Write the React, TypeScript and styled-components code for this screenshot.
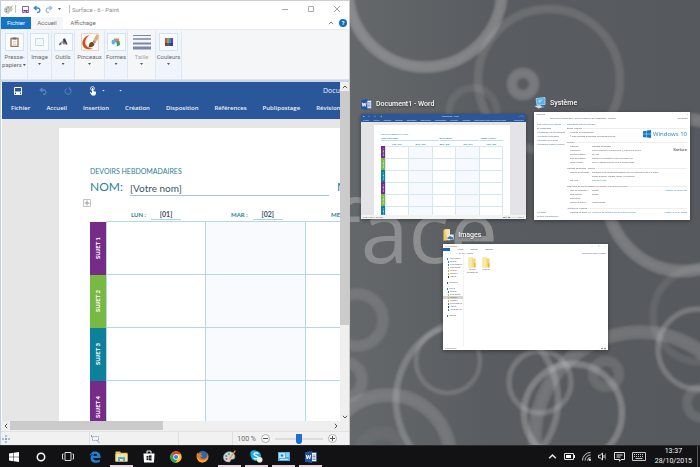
import React from "react";
import styled, { createGlobalStyle, css } from "styled-components";

const GlobalStyle = createGlobalStyle`
  *, *::before, *::after { box-sizing: border-box; }
  body { margin: 0; font-family: Roboto, "Open Sans", sans-serif; font-size: 7px; }
  button { font: inherit; color: inherit; background: none; border: 0; padding: 0; margin: 0; }
  svg { display: block; flex: none; }
  ul, figure, h1, h2, h3, p, dl, dd { margin: 0; padding: 0; font: inherit; list-style: none; }
`;

const Desktop = styled.div`
  display: flex;
  flex-direction: column;
  height: 100vh;
  overflow: hidden;
  background: #595c60;
`;

const Workspace = styled.main`
  flex: 1;
  min-height: 0;
  display: grid;
  grid-template-columns: 1fr 1fr;
`;

/* ---------- Paint window ---------- */

const PaintWindow = styled.section`
  display: flex;
  flex-direction: column;
  min-width: 0;
  min-height: 0;
  background: #fff;
  border-top: 1px solid #cfcfcf;
  border-left: 1px solid #bcd0ea;
  border-right: 1px solid #c8c8c8;
  color: #6d6d6d;
`;

const TitleBar = styled.header`
  display: flex;
  align-items: center;
  height: 16px;
  padding: 0 9px 0 3px;
`;

const Divider = styled.span`
  width: 1px;
  height: 8px;
  margin-left: 2px;
  background: #c4c4c4;
`;

const QuickAccess = styled.div`
  display: flex;
  align-items: center;
  gap: 4px;
  padding: 0 5px 0 6px;
`;

const WindowTitle = styled.h1`
  flex: 1;
  padding-left: 2px;
  color: #8f8f8f;
  font-size: 6px;
`;

const WindowButtons = styled.div`
  display: flex;
  align-items: center;
  gap: 20px;
`;

const IconButton = styled.button`
  display: flex;
  align-items: center;
  justify-content: center;
`;

const TabBar = styled.nav`
  display: flex;
  align-items: stretch;
  height: 12px;
  padding-right: 2px;
  font-size: 6px;
`;

const PaintTab = styled.button<{ $kind?: "file" | "active" }>`
  width: 32px;
  line-height: 12px;
  ${(p) =>
    p.$kind === "file" &&
    css`
      width: 30px;
      background: #1473c6;
      color: #fff;
    `}
  ${(p) => p.$kind === "active" && css`background: #f5f6f7;`}
  ${(p) => !p.$kind && css`width: 40px;`}
`;

const TabTools = styled.div`
  display: flex;
  align-items: center;
  gap: 5px;
  margin-left: auto;
`;

const HelpButton = styled.button`
  width: 8px;
  height: 8px;
  border-radius: 50%;
  background: #0f6fc5;
  color: #fff;
  line-height: 8px;
  font-weight: 700;
`;

const Ribbon = styled.div`
  display: flex;
  height: 51px;
  padding: 1px 1px 0;
  background: #f5f6f8;
  border-top: 1px solid #e6e9ee;
  border-bottom: 1px solid #dce3ee;
  font-size: 6px;
`;

const RibbonButton = styled.button<{ $width: number; $plain?: boolean; $muted?: boolean }>`
  display: flex;
  flex-direction: column;
  align-items: center;
  width: ${(p) => p.$width}px;
  padding-top: 2px;
  line-height: 8px;
  white-space: nowrap;
  border-right: 1px solid #dde8f4;
  background: ${(p) => (p.$plain ? "transparent" : "#f0f5fb")};
  color: ${(p) => (p.$muted ? "#ababab" : "#6b6b6b")};
`;

const RibbonIcon = styled.span<{ $framed?: boolean }>`
  display: flex;
  align-items: center;
  justify-content: center;
  width: 19px;
  height: 18px;
  margin-bottom: 2px;
  border: 1px solid ${(p) => (p.$framed ? "#d3e3f4" : "transparent")};
  background: ${(p) => (p.$framed ? "#f9fcff" : "transparent")};
`;

const RibbonLabel = styled.span`
  display: flex;
  align-items: center;
`;

const Caret = styled.span<{ $light?: boolean }>`
  flex: none;
  width: 3px;
  height: 2px;
  margin: 2px 1px;
  background: ${(p) => (p.$light ? "#e6eefa" : "#555")};
  clip-path: polygon(0 0, 100% 0, 50% 100%);
`;

const CanvasArea = styled.div`
  flex: 1;
  min-height: 0;
  display: grid;
  grid-template-columns: minmax(0, 1fr) 9px;
  grid-template-rows: minmax(0, 1fr) 10px;
  border-top: 2px solid #c9d6ea;
`;

const Canvas = styled.div`
  display: flex;
  flex-direction: column;
  overflow: hidden;
  margin-left: 1px;
  background: #e6e6e6;
`;

const ScrollBar = styled.div<{ $horizontal?: boolean }>`
  display: flex;
  flex-direction: ${(p) => (p.$horizontal ? "row" : "column")};
  align-items: stretch;
  background: #efefef;
  grid-column: ${(p) => (p.$horizontal ? "1 / -1" : "auto")};
  button { flex: 0 0 9px; }
`;

const ScrollThumb = styled.div<{ $share: number }>`
  flex: 0 0 ${(p) => p.$share}%;
  margin-bottom: 1px;
  background: #cbcbcb;
`;

const Spacer = styled.div`
  flex: 1;
`;

/* Word document shown on the canvas */

const WordHeader = styled.div`
  flex: none;
  height: 37px;
  background: #2a579a;
  color: #eef3fa;
  font-family: "Open Sans", "Noto Sans", sans-serif;
`;

const WordQuickBar = styled.div`
  display: flex;
  align-items: center;
  height: 17px;
  padding-left: 12px;
`;

const WordQuickTools = styled.div`
  display: flex;
  align-items: center;
  gap: 17px;
`;

const TouchTools = styled.div`
  display: flex;
  align-items: center;
  gap: 4px;
  margin-right: -5px;
`;

const DocTitle = styled.span`
  margin-left: auto;
  width: 17px;
  overflow: hidden;
  white-space: nowrap;
`;

const WordTabs = styled.nav`
  display: flex;
  align-items: center;
  gap: 16px;
  height: 18px;
  padding-left: 9px;
  font-size: 6px;
  white-space: nowrap;
  font-weight: 600;
`;

const Sheet = styled.article`
  flex: 1;
  min-height: 0;
  overflow: hidden;
  margin: 9px 0 0 57px;
  padding: 38px 0 0 31px;
  background: #fff;
  color: #2c7f97;
  font-family: Lato, "Liberation Sans", sans-serif;
  white-space: nowrap;
`;

const SheetTitle = styled.h2`
  font-size: 7px;
  line-height: 10px;
`;

const NameLine = styled.div`
  display: flex;
  align-items: flex-end;
  height: 20px;
  font-size: 12px;
  line-height: 18px;
`;

const NameField = styled.span`
  flex: 0 0 199px;
  margin: 0 8px 0 7px;
  border-bottom: 1px solid #a9c4cc;
  color: #3c5566;
  font-size: 10px;
  line-height: 14px;
`;

const HandleRow = styled.div`
  height: 12px;
  padding-top: 3px;
  margin-left: -7px;
`;

const DayRow = styled.div`
  display: flex;
  height: 13px;
  padding-left: 15px;
  font-size: 6px;
  font-weight: 700;
  line-height: 13px;
`;

const Day = styled.div`
  flex: 0 0 100px;
  display: flex;
  align-items: center;
  gap: 5px;
  padding-left: 26px;
`;

const DayValue = styled.span`
  width: 30px;
  border-bottom: 1px solid #b2d2dc;
  text-align: center;
  color: #35505f;
  font-size: 7px;
  line-height: 9px;
`;

const WeekTable = styled.table`
  border-collapse: collapse;
  table-layout: fixed;
  width: 416px;
`;

const SubjectCell = styled.th<{ $color: string; $width: number }>`
  width: ${(p) => p.$width}px;
  padding: 0;
  background: ${(p) => p.$color};
  color: #fff;
  span {
    display: block;
    margin: 0 auto;
    writing-mode: vertical-rl;
    transform: rotate(180deg);
  }
`;

const WeekSubject = styled(SubjectCell)`
  height: 53px;
  font-size: 6px;
  font-weight: 900;
  line-height: 16px;
`;

const WeekCell = styled.td<{ $tinted?: boolean }>`
  border: 1px solid #b3d8e6;
  background: ${(p) => (p.$tinted ? "#f9fafd" : "#fff")};
`;

const StatusBar = styled.footer`
  display: flex;
  align-items: center;
  height: 14px;
  background: #f1f1f1;
  border-top: 1px solid #e2e2e2;
`;

const StatusCell = styled.div<{ $width: number }>`
  display: flex;
  align-items: center;
  width: ${(p) => p.$width}px;
  height: 100%;
  padding-left: 1px;
  border-right: 1px solid #dfdfdf;
`;

const ZoomControl = styled.label`
  display: flex;
  align-items: center;
  gap: 5px;
  margin-left: auto;
  padding-right: 12px;
`;

const RoundButton = styled.button`
  width: 9px;
  height: 9px;
  border: 1px solid #b4b4b4;
  border-radius: 50%;
  background: #fafafa;
  display: flex;
  align-items: center;
  justify-content: center;
`;

const ZoomRange = styled.input`
  appearance: none;
  width: 48px;
  height: 10px;
  margin: 0;
  background: linear-gradient(#dcdcdc, #dcdcdc) center / 100% 2px no-repeat;
  &::-webkit-slider-thumb {
    appearance: none;
    width: 6px;
    height: 10px;
    background: #1a6fd0;
    border-radius: 0 0 3px 3px;
  }
`;

/* ---------- Task switcher ---------- */

const Switcher = styled.section`
  position: relative;
  display: flex;
  flex-direction: column;
  justify-content: center;
  gap: 7px;
  min-width: 0;
  padding: 0 10px 0 11px;
  background: linear-gradient(90deg, #65686b, #595c60 40%, #56595d);
  overflow: hidden;
`;

const Wallpaper = styled.svg`
  position: absolute;
  inset: 0;
  width: 100%;
  height: 100%;
`;

const PreviewRow = styled.div<{ $columns: string }>`
  position: relative;
  display: grid;
  grid-template-columns: ${(p) => p.$columns};
  justify-content: center;
  align-items: center;
  gap: 8px;
`;

const Preview = styled.figure`
  min-width: 0;
`;

const PreviewCaption = styled.figcaption`
  display: flex;
  align-items: center;
  gap: 4px;
  height: 17px;
  padding-bottom: 2px;
  color: #f8f8f8;
  font-size: 7px;
  font-weight: 500;
  text-shadow: 0 1px 2px rgba(0, 0, 0, 0.5);
`;

const Thumb = styled.div<{ $ratio: string }>`
  display: flex;
  flex-direction: column;
  aspect-ratio: ${(p) => p.$ratio};
  overflow: hidden;
  background: #fff;
  color: #555;
  font-family: "Liberation Sans", sans-serif;
  font-size: 2px;
  line-height: 4px;
  white-space: nowrap;
  box-shadow: 0 1px 4px rgba(0, 0, 0, 0.4);
`;

const MiniWordHeader = styled.div`
  height: 8px;
  background: #2a579a;
  color: #e4ecf7;
`;

const MiniLine = styled.div<{ $gap?: number }>`
  display: flex;
  gap: ${(p) => p.$gap ?? 5}px;
  height: 4px;
  padding: 0 2px;
`;

const MiniDesk = styled.div`
  flex: 1;
  min-height: 0;
  display: flex;
  justify-content: center;
  padding: 3px 16px 0 13px;
  background: #e4e4e6;
  overflow: hidden;
`;

const MiniSheet = styled.div`
  flex: 1;
  padding: 7px 7px 0;
  background: #fff;
  color: #2c7f97;
  overflow: hidden;
`;

const MiniFields = styled.div`
  display: grid;
  grid-template-columns: 58fr 40fr 23fr;
  gap: 1px;
  font-weight: 700;
  span { border-bottom: 1px solid #c6dde4; height: 5px; }
`;

const MiniDays = styled.div`
  display: flex;
  justify-content: space-around;
  padding-left: 4px;
  margin-top: 1px;
  height: 4px;
  font-weight: 700;
`;

const MiniTable = styled(WeekTable)`
  width: 100%;
`;

const MiniSubject = styled(SubjectCell)`
  height: 12px;
  font-size: 2px;
  line-height: 4px;
`;

const MiniCell = styled.td<{ $tinted?: boolean }>`
  padding: 0;
  border: 1px solid #d6e7f0;
  background: ${(p) => (p.$tinted ? "#f6f9fd" : "#fff")};
`;

const MiniStatus = styled.div`
  display: flex;
  justify-content: space-between;
  height: 4px;
  padding: 0 2px;
  background: #f3f3f3;
`;

const MiniBody = styled.div<{ $side: number }>`
  flex: 1;
  min-height: 0;
  display: grid;
  grid-template-columns: ${(p) => p.$side}px minmax(0, 1fr);
`;

const SideList = styled.div`
  display: flex;
  flex-direction: column;
  padding: 2px 0 2px 3px;
  color: #44688f;
`;

const SystemContent = styled.div`
  padding: 2px 3px 0 1px;
`;

const SystemHeading = styled.h2`
  color: #2e6aa5;
`;

const SystemSection = styled.h3`
  display: flex;
  align-items: center;
  gap: 1px;
  &::after { content: ""; flex: 1; height: 1px; background: #ededed; }
`;

const SystemBlock = styled.div`
  display: flex;
  justify-content: space-between;
  align-items: flex-start;
  margin-bottom: 2px;
  padding-left: 3px;
`;

const SystemRows = styled.dl`
  display: grid;
  grid-template-columns: 22px auto;
`;

const WindowsMark = styled.span`
  display: flex;
  align-items: center;
  gap: 2px;
  color: #1a7fd1;
  font-family: "Open Sans", sans-serif;
  font-size: 6px;
  line-height: 8px;
`;

const SurfaceMark = styled.span`
  color: #333;
  font-size: 4px;
  line-height: 12px;
`;

const Link = styled.a`
  color: #2f7fc9;
  text-decoration: none;
`;

const ExplorerTabs = styled.div`
  display: flex;
  gap: 7px;
  height: 3px;
  line-height: 3px;
  span:first-child { width: 7px; background: #1668b5; }
`;

const TreeItem = styled.div<{ $level?: number; $selected?: boolean; $tone: string }>`
  display: flex;
  align-items: center;
  gap: 1px;
  height: 3px;
  line-height: 3px;
  padding-left: ${(p) => (p.$level ? 5 : 4)}px;
  background: ${(p) => (p.$selected ? "#d4d4d4" : "transparent")};
  &::before { content: ""; width: 1px; height: 2px; background: ${(p) => p.$tone}; }
`;

const Tree = styled.div`
  padding-top: 2px;
  border-right: 1px solid #f2f2f2;
`;

const FolderGrid = styled.div`
  display: flex;
  gap: 6px;
  padding: 2px 4px;
`;

const FolderItem = styled.div`
  display: flex;
  flex-direction: column;
  align-items: center;
  width: 8px;
  line-height: 3px;
`;

/* ---------- Taskbar ---------- */

const Taskbar = styled.footer`
  display: flex;
  flex: none;
  height: 22px;
  background: #121214;
  border-top: 1px solid #2b2c2e;
  color: #f2f2f2;
`;

const TaskButton = styled.button<{ $open?: boolean }>`
  width: 27px;
  display: flex;
  align-items: center;
  justify-content: center;
  background: ${(p) =>
    p.$open ? "linear-gradient(#ded6dc, #ded6dc) center bottom / 23px 2px no-repeat" : "none"};
`;

const Tray = styled.div`
  display: flex;
  align-items: center;
  gap: 7px;
  margin-left: auto;
`;

const Clock = styled.time`
  padding: 0 5px 0 2px;
  margin-right: 2px;
  border-right: 1px solid #55575a;
  text-align: center;
  line-height: 10px;
  height: 21px;
`;

/* ---------- Icons ---------- */

const SaveIcon = ({ color = "#7a3f98", size = 7 }: { color?: string; size?: number }) => (
  <svg width={size} height={size} viewBox="0 0 8 8">
    <path d="M.5.5h7v7h-7z" fill="none" stroke={color} />
    <path d="M1 4.500h6v1H1zM2 5h4v3H2z" fill={color} />
    <path d="M3 6h1v2H3z" fill="#fff" />
  </svg>
);

const UndoIcon = ({ color, flip }: { color: string; flip?: boolean }) => (
  <svg width="8" height="8" viewBox="0 0 8 8">
    <g transform={flip ? "translate(8 0) scale(-1 1)" : undefined} fill="none" stroke={color} strokeWidth="1.3">
      <path d="M3.500 1 1.200 3l2.300 2M1.500 3h3.200a2.200 2.200 0 0 1 0 4.400H4" />
    </g>
  </svg>
);

const RedoCircleIcon = () => (
  <svg width="8" height="8" viewBox="0 0 8 8" fill="none" stroke="#5d83bb">
    <path d="M2.600 1.600a3 3 0 1 0 3 .1M5.400.3v2h2" />
  </svg>
);

const TouchIcon = () => (
  <svg width="8" height="10" viewBox="0 0 8 10">
    <circle cx="3.500" cy="2.500" r="1.900" fill="none" stroke="#fff" strokeWidth=".8" />
    <path d="M3 2h1.200v3l2.800.8v1.800L6 9.500H3L.8 6.600l.8-.6L3 7z" fill="#fff" />
  </svg>
);

const Chevron = ({ d, color = "#555", size = 6 }: { d: string; color?: string; size?: number }) => (
  <svg width={size} height={size} viewBox="0 0 6 6" fill="none" stroke={color}>
    <path d={d} />
  </svg>
);
const UP = "M.8 4.200 3 2l2.200 2.200";
const DOWN = "M.8 1.800 3 4l2.200-2.200";
const LEFT = "M4.200.8 2 3l2.200 2.200";
const RIGHT = "M1.800.8 4 3 1.800 5.200";

const PaletteIcon = ({ size = 9 }: { size?: number }) => (
  <svg width={size} height={size} viewBox="0 0 14 14">
    <path d="M8 2C3.500 1.500.5 4.500.5 8s3 5 6 5c1.600 0 1.200-1.600 2-2.500 1.200-1.200 4 .2 4.300-3C13 4.800 11 2.400 8 2z" fill="#cfd6d8" stroke="#8e989c" strokeWidth=".6" />
    <circle cx="3.600" cy="6.500" r="1.200" fill="#3b8fd0" />
    <circle cx="6.500" cy="4.300" r="1.200" fill="#59ab4e" />
    <circle cx="3.800" cy="9.700" r="1.200" fill="#d9534a" />
    <path d="M12.800.4 7.200 8.200l-1 2.300 2-1.400L13.800 1z" fill="#d9a03f" />
  </svg>
);

const ClipboardIcon = () => (
  <svg width="9" height="10" viewBox="0 0 9 10">
    <path d="M1 1.500h7v8H1z" fill="#fff" stroke="#a3734c" strokeWidth="1.300" />
    <path d="M2.700.5h3.600v2H2.700z" fill="#6b6b6b" />
    <path d="M3 4.500h3M3 6h3M3 7.500h3" stroke="#b9b9b9" strokeWidth=".6" />
  </svg>
);

const SelectIcon = () => (
  <svg width="9" height="8" viewBox="0 0 9 8">
    <path d="M.5.5h8v7h-8z" fill="#f3f9fd" stroke="#8fb6cf" strokeDasharray="1 .6" strokeWidth=".7" />
  </svg>
);

const ToolsIcon = () => (
  <svg width="10" height="8" viewBox="0 0 10 8">
    <path d="M.8 7.500 2 4.600l1.800 1.500z" fill="#384b63" />
    <path d="m2.400 4.400 2-1.900L6 4 3.900 6z" fill="#8aa7c4" />
    <path d="m5 1 2-.8 2.500 6-1.700.5L7 4.500 5.500 5z" fill="#34435a" />
    <circle cx="6" cy="5.500" r="1" fill="#d5563b" />
  </svg>
);

const BrushIcon = () => (
  <svg width="18" height="18" viewBox="0 0 18 18">
    <path d="M.5.5h17v17H.5z" fill="#fbf8f5" stroke="#e0d6ce" />
    <path d="M8.500 2C4 3 .8 7 1.500 11.500 2.500 16 8 17.500 12 15.500 7.500 15.500 4 13 4.200 9c.2-3 2.300-5.500 4.300-7z" fill="#cf4f20" />
    <path d="M8 12.500c.2-2.500 2-4.100 4-3.100l1.400 1.500c-.3 2.700-3.400 3.600-6.400 3.300.8-.6 1-.8 1-1.700z" fill="#754522" />
    <path d="m12 8.500 3.300-7L17.500 2 17 6l-3.300 4.300z" fill="#e6aa72" />
    <path d="m11.500 9 1.200-1.800 2 1.700-1 1.900z" fill="#8b9399" />
  </svg>
);

const ShapesIcon = () => (
  <svg width="10" height="9" viewBox="0 0 10 9">
    <path d="M3 .5h5v4H3z" fill="#ea7b66" />
    <circle cx="3" cy="4" r="2.500" fill="#60aee0" />
    <path d="M5 3.500 8.500 3 9 7 6 8.500z" fill="#3e9a65" />
    <path d="M3.600 4.500h2v4h-2z" fill="#e7f3f9" />
  </svg>
);

const SizeIcon = () => (
  <svg width="18" height="16" viewBox="0 0 18 16" stroke="#7d87a8">
    <path d="M0 1.500h18" strokeWidth="1" />
    <path d="M0 5h18" strokeWidth="1.500" />
    <path d="M0 9.500h18" strokeWidth="2" />
    <path d="M0 14h18" strokeWidth="3" />
  </svg>
);

const ColorsIcon = () => (
  <svg width="8" height="8" viewBox="0 0 8 8">
    <path d="M0 0h2v8H0z" fill="#e8463c" />
    <path d="M2 0h2v8H2z" fill="#64c441" />
    <path d="M4 0h2v8H4z" fill="#3292d8" />
    <path d="M6 0h2v8H6z" fill="#7a35c4" />
    <path d="M0 5h8v3H0z" fill="#3b1f59" opacity=".55" />
  </svg>
);

const MoveHandle = () => (
  <svg width="8" height="8" viewBox="0 0 8 8" fill="none" stroke="#c4c4c4">
    <path d="M.5.5h7v7h-7z" />
    <path d="M4 1.500v5M1.500 4h5" stroke="#9c9c9c" />
  </svg>
);

const CrossIcon = () => (
  <svg width="8" height="8" viewBox="0 0 8 8" fill="none" stroke="#6f86ad">
    <path d="M4 0v8M0 4h8" strokeDasharray="2 1" />
  </svg>
);

const CropIcon = () => (
  <svg width="9" height="8" viewBox="0 0 9 8" fill="none" stroke="#8c9fc2">
    <path d="M1.500 1.500h6v4h-6z" strokeDasharray="2 .6" strokeWidth=".8" />
    <path d="M6 5.500 8.500 8M.5 0v2" />
  </svg>
);

const WindowsIcon = ({ size = 10, color = "#fff" }: { size?: number; color?: string }) => (
  <svg width={size} height={size} viewBox="0 0 10 10" fill={color}>
    <path d="M0 1.500 4.500.8v4H0zM5 .7 10 0v4.800H5zM0 5.300h4.500v4L0 8.600zM5 5.300h5V10l-5-.7z" />
  </svg>
);

const WordIcon = ({ size = 11 }: { size?: number }) => (
  <svg width={size} height={size} viewBox="0 0 12 12">
    <path d="M6 1.500h5.500v9H6z" fill="#f5f8fd" stroke="#2a579a" strokeWidth=".7" />
    <path d="M7.500 4h3M7.500 5.500h3M7.500 7h3M7.500 8.500h3" stroke="#2a579a" strokeWidth=".6" />
    <path d="M0 1.300 7 0v12L0 10.700z" fill="#2453a0" />
    <path d="m1.300 4 .9 4 1.200-3.600L4.600 8l1-4" fill="none" stroke="#fff" />
  </svg>
);

const SystemIcon = () => (
  <svg width="12" height="12" viewBox="0 0 12 12">
    <path d="M2 1.500 11 .5v7L3 8z" fill="#4eb2ec" stroke="#bfe4fa" strokeWidth=".7" />
    <path d="m4 3 5-.6L5 6.500z" fill="#9bd8fa" />
    <path d="m.5 9 5-1 3.500 2-4.500 1.500z" fill="#d5dde3" />
    <circle cx="9" cy="10" r="1.300" fill="#3a8bcb" />
  </svg>
);

const PicturesIcon = () => (
  <svg width="11" height="12" viewBox="0 0 11 12">
    <path d="M.5 1 2 .3h4.500V11L.5 11.700z" fill="#f1cc63" />
    <path d="M2 .3h5v11H5z" fill="#f9e3a0" />
    <path d="M4 5.500h6.700v5H4z" fill="#dceffa" />
    <path d="M4.500 8.500 7 7l3.200 1.500V10H4.500z" fill="#3d7fae" />
  </svg>
);

const EdgeIcon = () => (
  <svg width="12" height="12" viewBox="0 0 12 12" fill="#2180d4">
    <path d="M.6 5.600C.9 2.400 3.200.4 6.200.4c3.300 0 5.300 2.300 5.300 5.200v1.500H4.200c.1 1.700 1.500 2.400 3.200 2.400 1.300 0 2.400-.3 3.400-.9v2.400c-1 .5-2.300.8-3.900.8-3.200 0-5.300-1.800-5.300-4.600 0-1.800.9-3.200 2.500-4.100C2.700 3.400 1.500 4 .6 5.600zm3.700-.8h3.900c0-1.200-.7-2-1.900-2S4.500 3.600 4.300 4.800z" />
  </svg>
);

const FolderIcon = () => (
  <svg width="13" height="11" viewBox="0 0 13 11">
    <path d="M.5.5H5l1 1.200h6.500v8.800H.5z" fill="#e9c457" />
    <path d="M.5 3h12v7.500H.5z" fill="#f8e39b" />
    <path d="M3 10.500V6h7v4.500H8V8H5v2.500z" fill="#4cb1dc" />
  </svg>
);

const StoreIcon = () => (
  <svg width="12" height="13" viewBox="0 0 12 13">
    <path d="M4 3.500V1h4v2.500" fill="none" stroke="#fff" />
    <path d="M.5 3.500h11l-.5 9H1z" fill="#fff" />
    <path d="m3.500 6 2-.3v2h-2zM6 5.600l2.500-.4v2.500H6zM3.500 8.200h2v2l-2-.3zM6 8.200h2.500v2.500L6 10.300z" fill="#161616" />
  </svg>
);

const ChromeIcon = () => (
  <svg width="12" height="12" viewBox="0 0 12 12">
    <circle cx="6" cy="6" r="5.700" fill="#f4c932" />
    <path d="M6 6 1.100 3.100A5.700 5.700 0 0 1 11 3.300H6z" fill="#dc4437" />
    <path d="M1.100 3.100a5.700 5.700 0 0 0 4.200 8.600L8 7.500 6 6z" fill="#2fa05a" />
    <circle cx="6" cy="6" r="2.700" fill="#fff" />
    <circle cx="6" cy="6" r="2.100" fill="#3d7ee0" />
  </svg>
);

const FirefoxIcon = () => (
  <svg width="13" height="13" viewBox="0 0 13 13">
    <circle cx="6.700" cy="6" r="5.300" fill="#2768b4" />
    <path d="M1.300 2.500C-.4 6 .6 10.500 4.300 12c4 1.500 8.200-1.200 8.200-5.500 0-1.500-.4-2.800-1.200-3.800.4 3-.6 5.500-3.300 6.100-2 .4-3.500-.8-3.700-2.300 1 .4 2 .2 2.600-.6L5 5.100c-.4-.8.200-1.500.9-1.900C4.400 2.700 3 3 2.400 3.900z" fill="#ea7a20" />
    <path d="M4 12c4 1.500 8-1.500 8-5.500-.8 3-3.500 4.500-6.500 4C3.500 10 2 9 1.300 7 1.300 9.500 2 11 4 12z" fill="#f3ae35" />
  </svg>
);

const SkypeIcon = () => (
  <svg width="13" height="13" viewBox="0 0 13 13">
    <circle cx="4" cy="4" r="3.700" fill="#1aaee8" />
    <circle cx="6" cy="6" r="5" fill="#1aaee8" />
    <path d="M8.300 4C7.700 2.600 4 2.500 4 4.300c0 2 4.300 1.100 4.300 3.200 0 1.900-4 1.900-4.700.3" fill="none" stroke="#fff" strokeWidth="1.300" />
    <circle cx="9.700" cy="9.700" r="2.800" fill="#eef3d8" />
  </svg>
);

const PanelIcon = () => (
  <svg width="12" height="9" viewBox="0 0 12 9">
    <path d="M0 0h12v9H0z" fill="#52b1e6" />
    <path d="M1 1h6v5H1z" fill="#c3e6f8" />
    <path d="M8 2h3M8 4h3M2 7.500h8" stroke="#e9f7ff" strokeWidth=".8" />
    <circle cx="4" cy="3.500" r="1.300" fill="#2b83be" />
  </svg>
);

const taskItems: { name: string; open?: boolean; icon: React.ReactNode }[] = [
  { name: "Démarrer", icon: <WindowsIcon /> },
  {
    name: "Cortana",
    icon: (
      <svg width="10" height="10" viewBox="0 0 10 10">
        <circle cx="5" cy="5" r="3.700" fill="none" stroke="#fff" strokeWidth="1.500" />
      </svg>
    ),
  },
  {
    name: "Affichage des tâches",
    icon: (
      <svg width="12" height="9" viewBox="0 0 12 9" fill="none" stroke="#d9d9d9">
        <path d="M3 .5h6v8H3zM1.500 2h-1v5h1M10.500 2h1v5h-1" />
      </svg>
    ),
  },
  { name: "Edge", icon: <EdgeIcon /> },
  { name: "Explorateur", open: true, icon: <FolderIcon /> },
  { name: "Store", icon: <StoreIcon /> },
  { name: "Chrome", icon: <ChromeIcon /> },
  { name: "Firefox", icon: <FirefoxIcon /> },
  { name: "Paint", open: true, icon: <PaletteIcon size={13} /> },
  { name: "Skype", open: true, icon: <SkypeIcon /> },
  { name: "Système", open: true, icon: <PanelIcon /> },
  { name: "Word", open: true, icon: <WordIcon size={12} /> },
];

const PURPLE = "#772b88";
const GREEN = "#78b944";
const TEAL = "#0d819b";

const subjects = [PURPLE, GREEN, TEAL, PURPLE];

/* x, y, radius, stroke width, opacity */
const rings: [number, number, number, number, number][] = [
  [75, -10, 77, 12, 0.42],
  [199, 80, 71, 9, 0.2],
  [173, 84, 11, 11, 0.32],
  [123, 112, 24, 8, 0.14],
  [333, 195, 76, 13, 0.36],
  [7, 320, 26, 12, 0.2],
  [-6, 380, 18, 12, 0.2],
  [38, 457, 62, 14, 0.26],
  [32, 455, 22, 14, 0.08],
  [127, 400, 81, 7, 0.34],
  [98, 361, 32, 5, 0.25],
  [190, 382, 31, 6, 0.3],
  [223, 413, 49, 7, 0.4],
  [290, 437, 105, 14, 0.28],
  [256, 374, 13, 11, 0.2],
  [350, 315, 47, 8, 0.14],
  [348, 349, 40, 6, 0.34],
  [352, 403, 15, 10, 0.2],
];

function PaintApp() {
  return (
    <PaintWindow>
      <TitleBar>
        <PaletteIcon />
        <Divider />
        <QuickAccess>
          <IconButton aria-label="Enregistrer"><SaveIcon /></IconButton>
          <IconButton aria-label="Annuler"><UndoIcon color="#2b8bcb" /></IconButton>
          <IconButton aria-label="Rétablir"><UndoIcon color="#a9bdd0" flip /></IconButton>
          <IconButton aria-label="Personnaliser"><Caret /></IconButton>
        </QuickAccess>
        <Divider />
        <WindowTitle>Surface - 6 - Paint</WindowTitle>
        <WindowButtons>
          <IconButton aria-label="Réduire">
            <svg width="6" height="6" stroke="#aaa"><path d="M0 3.500h6" /></svg>
          </IconButton>
          <IconButton aria-label="Agrandir">
            <svg width="6" height="6" stroke="#aaa" fill="none"><path d="M.5.5h5v5h-5z" /></svg>
          </IconButton>
          <IconButton aria-label="Fermer">
            <svg width="6" height="6" stroke="#aaa"><path d="m0 0 6 6M6 0 0 6" /></svg>
          </IconButton>
        </WindowButtons>
      </TitleBar>
      <TabBar>
        <PaintTab $kind="file">Fichier</PaintTab>
        <PaintTab $kind="active">Accueil</PaintTab>
        <PaintTab>Affichage</PaintTab>
        <TabTools>
          <IconButton aria-label="Réduire le ruban"><Chevron d={UP} color="#888" /></IconButton>
          <HelpButton>?</HelpButton>
        </TabTools>
      </TabBar>
      <Ribbon>
        <RibbonButton $width={26}>
          <RibbonIcon $framed><ClipboardIcon /></RibbonIcon>
          Presse-
          <RibbonLabel>papiers<Caret /></RibbonLabel>
        </RibbonButton>
        <RibbonButton $width={24}>
          <RibbonIcon $framed><SelectIcon /></RibbonIcon>
          Image<Caret />
        </RibbonButton>
        <RibbonButton $width={23}>
          <RibbonIcon $framed><ToolsIcon /></RibbonIcon>
          Outils<Caret />
        </RibbonButton>
        <RibbonButton $width={30} $plain>
          <RibbonIcon><BrushIcon /></RibbonIcon>
          Pinceaux<Caret />
        </RibbonButton>
        <RibbonButton $width={23}>
          <RibbonIcon $framed><ShapesIcon /></RibbonIcon>
          Formes<Caret />
        </RibbonButton>
        <RibbonButton $width={28} $plain $muted>
          <RibbonIcon><SizeIcon /></RibbonIcon>
          Taille<Caret />
        </RibbonButton>
        <RibbonButton $width={26}>
          <RibbonIcon $framed><ColorsIcon /></RibbonIcon>
          Couleurs<Caret />
        </RibbonButton>
      </Ribbon>
      <CanvasArea>
        <Canvas>
          <WordHeader>
            <WordQuickBar>
              <WordQuickTools>
                <SaveIcon color="#fff" size={8} />
                <UndoIcon color="#5d83bb" />
                <RedoCircleIcon />
                <TouchTools><TouchIcon /><Caret $light /></TouchTools>
                <Caret $light />
              </WordQuickTools>
              <DocTitle>Document1</DocTitle>
            </WordQuickBar>
            <WordTabs>
              {["Fichier", "Accueil", "Insertion", "Création", "Disposition", "Références", "Publipostage", "Révision"].map((t) => (
                <button key={t}>{t}</button>
              ))}
            </WordTabs>
          </WordHeader>
          <Sheet>
            <SheetTitle>DEVOIRS HEBDOMADAIRES</SheetTitle>
            <NameLine>
              NOM: <NameField>[Votre nom]</NameField> MOIS
            </NameLine>
            <HandleRow><MoveHandle /></HandleRow>
            <DayRow>
              {[["LUN :", "[01]"], ["MAR :", "[02]"], ["MER :", "[03]"]].map(([d, n]) => (
                <Day key={d}>{d}<DayValue>{n}</DayValue></Day>
              ))}
            </DayRow>
            <WeekTable>
              <tbody>
                {subjects.map((c, i) => (
                  <tr key={i}>
                    <WeekSubject $color={c} $width={16}><span>SUJET {i + 1}</span></WeekSubject>
                    <WeekCell />
                    <WeekCell $tinted />
                    <WeekCell />
                    <WeekCell $tinted />
                  </tr>
                ))}
              </tbody>
            </WeekTable>
          </Sheet>
        </Canvas>
        <ScrollBar>
          <IconButton aria-label="Haut"><Chevron d={UP} /></IconButton>
          <ScrollThumb $share={69} />
          <Spacer />
          <IconButton aria-label="Bas"><Chevron d={DOWN} /></IconButton>
        </ScrollBar>
        <ScrollBar $horizontal>
          <IconButton aria-label="Gauche"><Chevron d={LEFT} /></IconButton>
          <ScrollThumb $share={44} />
          <Spacer />
          <IconButton aria-label="Droite"><Chevron d={RIGHT} /></IconButton>
          <IconButton aria-label="Redimensionner" />
        </ScrollBar>
      </CanvasArea>
      <StatusBar>
        <StatusCell $width={89}><CrossIcon /></StatusCell>
        <StatusCell $width={89}><CropIcon /></StatusCell>
        <StatusCell $width={54} />
        <ZoomControl>
          100 %
          <RoundButton aria-label="Zoom arrière">
            <svg width="5" height="5" stroke="#555"><path d="M0 2.500h5" /></svg>
          </RoundButton>
          <ZoomRange type="range" min="0" max="100" defaultValue="50" aria-label="Zoom" />
          <RoundButton aria-label="Zoom avant">
            <svg width="5" height="5" stroke="#555"><path d="M0 2.500h5M2.500 0v5" /></svg>
          </RoundButton>
        </ZoomControl>
      </StatusBar>
    </PaintWindow>
  );
}

function WordPreview() {
  return (
    <Preview>
      <PreviewCaption><WordIcon />Document1 - Word</PreviewCaption>
      <Thumb $ratio="165 / 105">
        <MiniWordHeader>
          <MiniLine $gap={4}><span>■</span><span>↶</span><span>↻</span><span>☝</span><Spacer /><span>Document1 - Word</span><Spacer /><span>— □ ×</span></MiniLine>
          <MiniLine $gap={4}>
            <span>Fichier</span><span>Accueil</span><span>Insertion</span><span>Création</span><span>Disposition</span><span>Références</span><span>Publipostage</span><span>Révision</span><span>Affichage</span><span>Dites-nous ce que vous voulez faire</span><Spacer /><span>Connexion</span><span>Partager</span>
          </MiniLine>
        </MiniWordHeader>
        <MiniDesk>
          <MiniSheet>
            DEVOIRS HEBDOMADAIRES
            <MiniFields><span>NOM: [Votre nom]</span><span>MOIS: [Mois]</span><span>ANNÉE: [Année]</span></MiniFields>
            <MiniDays>
              {["LUN : [01]", "MAR : [02]", "MER : [03]", "JEU : [04]", "VEN : [05]"].map((d) => <span key={d}>{d}</span>)}
            </MiniDays>
            <MiniTable>
              <tbody>
                {[PURPLE, GREEN, TEAL, PURPLE, GREEN, TEAL].map((c, i) => (
                  <tr key={i}>
                    <MiniSubject $color={c} $width={4}><span>SUJET {i + 1}</span></MiniSubject>
                    <MiniCell /><MiniCell $tinted /><MiniCell /><MiniCell $tinted /><MiniCell />
                  </tr>
                ))}
              </tbody>
            </MiniTable>
          </MiniSheet>
        </MiniDesk>
        <MiniStatus><span>Page 1 sur 1 &nbsp; 51 mots</span><span>▤ ▥ ▦ — ▪ — + 100 %</span></MiniStatus>
      </Thumb>
    </Preview>
  );
}

function SystemPreview() {
  return (
    <Preview>
      <PreviewCaption><SystemIcon />Système</PreviewCaption>
      <Thumb $ratio="156 / 108">
        <MiniLine><span>▪ Système</span><Spacer /><span>×</span></MiniLine>
        <MiniLine $gap={3}><span>←</span><span>→</span><span>↑</span><span>Panneau de configuration › Tous les Panneaux de configuration › Système</span><Spacer /><span>Rechercher</span></MiniLine>
        <MiniBody $side={32}>
          <SideList>
            <span>Page d'accueil du panneau</span>
            <span>de configuration</span>
            <span>▪ Gestionnaire de périphériques</span>
            <span>▪ Paramètres d'utilisation</span>
            <span>▪ Protection du système</span>
            <span>▪ Paramètres système avancés</span>
            <Spacer />
            <span>Voir aussi</span>
            <span>Sécurité et maintenance</span>
          </SideList>
          <SystemContent>
            <SystemHeading>Informations système générales</SystemHeading>
            <SystemSection>Édition Windows</SystemSection>
            <SystemBlock>
              <div>
                <p>Windows 10 Professionnel</p>
                <p>© 2015 Microsoft Corporation. Tous droits réservés.</p>
              </div>
              <WindowsMark><WindowsIcon size={8} color="#0f76c8" />Windows 10</WindowsMark>
            </SystemBlock>
            <SystemSection>Système</SystemSection>
            <SystemBlock>
              <SystemRows>
                <dt>Fabricant :</dt><dd>Microsoft Corporation</dd>
                <dt>Processeur :</dt><dd>Intel(R) Core(TM) i7-6650U CPU @ 2.20GHz 2.21 GHz</dd>
                <dt>Mémoire installée :</dt><dd>16,0 Go</dd>
                <dt>Type du système :</dt><dd>Système d'exploitation 64 bits, processeur x64</dd>
                <dt>Stylet et tactile :</dt><dd>Prise en charge du stylet et de la fonction tactile</dd>
              </SystemRows>
              <SurfaceMark>Surface</SurfaceMark>
            </SystemBlock>
            <SystemSection>Microsoft Corporation - Support</SystemSection>
            <SystemBlock>
              <SystemRows>
                <dt>Numéro de téléphone :</dt><dd>Consultez le site du support technique pour les numéros par pays et région</dd>
                <dt /><dd>Suisse, Belgique, Canada, France, Luxembourg</dd>
                <dt>Site Web :</dt><dd><Link href="#support">Support en ligne</Link></dd>
              </SystemRows>
            </SystemBlock>
            <SystemSection>Paramètres de nom d'ordinateur, de domaine et de groupe de travail</SystemSection>
            <SystemBlock>
              <SystemRows>
                <dt>Nom de l'ordinateur :</dt><dd>Surface</dd>
                <dt>Nom complet :</dt><dd>Surface</dd>
                <dt>Description :</dt><dd />
                <dt>Groupe de travail :</dt><dd>WORKGROUP</dd>
              </SystemRows>
              <Link href="#parametres">▪ Modifier les paramètres</Link>
            </SystemBlock>
            <SystemSection>Activation de Windows</SystemSection>
            <SystemBlock>
              <p>Windows est activé &nbsp;<Link href="#licence">Lire les termes du contrat de licence logiciel Microsoft</Link></p>
              <Link href="#cle">▪ Modifier la clé de produit</Link>
            </SystemBlock>
          </SystemContent>
        </MiniBody>
      </Thumb>
    </Preview>
  );
}

const tree: [string, number, string][] = [
  ["Accès rapide", 0, "#3b82c4"],
  ["Bureau", 1, "#3b82c4"],
  ["Téléchargem.", 1, "#3b82c4"],
  ["Documents", 1, "#c9b27a"],
  ["Images", 1, "#c9b27a"],
  ["Musique", 1, "#e0b050"],
  ["Vidéos", 1, "#444"],
  ["", 0, "transparent"],
  ["OneDrive", 0, "#1668b5"],
  ["", 0, "transparent"],
  ["Ce PC", 0, "#3b82c4"],
  ["Bureau", 1, "#3b82c4"],
  ["Documents", 1, "#c9b27a"],
  ["Images ", 1, "#c9b27a"],
  ["Musique", 1, "#e0b050"],
  ["Téléchargem.", 1, "#3b82c4"],
  ["Vidéos", 1, "#444"],
  ["Windows (C:)", 1, "#3b82c4"],
  ["", 0, "transparent"],
  ["Réseau", 0, "#3b82c4"],
];

const MiniFolder = () => (
  <svg width="8" height="11" viewBox="0 0 8 11">
    <path d="M.5.5h4l1 1h2v9h-7z" fill="#f6d673" />
    <path d="M1 1h3.500v9.500H1z" fill="#fbe7a6" />
    <path d="M6 6h1.500v4.500H6z" fill="#e5bb48" />
  </svg>
);

function ImagesPreview() {
  return (
    <Preview>
      <PreviewCaption><PicturesIcon />Images</PreviewCaption>
      <Thumb $ratio="166 / 106">
        <MiniLine><span>▪ ▫ ▪ | Images</span><Spacer /><span>—</span><span>□</span><span>×</span></MiniLine>
        <ExplorerTabs><span /><span>Accueil</span><span>Partage</span><span>Affichage</span></ExplorerTabs>
        <MiniLine><span>← → ↑</span><span>▪ › Ce PC › Images</span><Spacer /><span>Rechercher dans : Images</span></MiniLine>
        <MiniBody $side={21}>
          <Tree>
            {tree.map(([n, l, c], i) => (
              <TreeItem key={i} $level={l} $tone={c} $selected={n === "Images "}>{n}</TreeItem>
            ))}
          </Tree>
          <FolderGrid>
            <FolderItem><MiniFolder /><span>Images</span><span>enregistrées</span></FolderItem>
            <FolderItem><MiniFolder /><span>Pellicule</span></FolderItem>
          </FolderGrid>
        </MiniBody>
        <MiniLine><span>2 élément(s)</span><Spacer /><span>▤ ▦</span></MiniLine>
      </Thumb>
    </Preview>
  );
}

export default function App() {
  return (
    <Desktop>
      <GlobalStyle />
      <Workspace>
        <PaintApp />
        <Switcher>
          <Wallpaper viewBox="0 0 350 445" preserveAspectRatio="xMidYMid slice" aria-hidden="true">
            <filter id="soft" x="-20%" y="-20%" width="140%" height="140%">
              <feGaussianBlur stdDeviation="1" />
            </filter>
            <g filter="url(#soft)">
              {rings.map(([x, y, r, w, o], i) => (
                <g key={i} fill="none" stroke="#c6c7c8" opacity={o}>
                  <circle cx={x} cy={y} r={r} strokeWidth={w} opacity=".75" />
                  <circle cx={x} cy={y} r={r} strokeWidth={w / 2} opacity=".55" />
                </g>
              ))}
            </g>
            <text x="148" y="263" textAnchor="end" fontFamily="Open Sans" fontWeight="400" fontSize="86" fill="#8c8e90">face</text>
          </Wallpaper>
          <PreviewRow $columns="165fr 156fr">
            <WordPreview />
            <SystemPreview />
          </PreviewRow>
          <PreviewRow $columns="50%">
            <ImagesPreview />
          </PreviewRow>
        </Switcher>
      </Workspace>
      <Taskbar>
        {taskItems.map((t) => (
          <TaskButton key={t.name} $open={t.open} aria-label={t.name}>{t.icon}</TaskButton>
        ))}
        <Tray>
          <IconButton aria-label="Icônes cachées"><Chevron d={UP} color="#e8e8e8" size={9} /></IconButton>
          <svg width="11" height="7" viewBox="0 0 11 7">
            <path d="M.5.5h9v6h-9z" fill="none" stroke="#ddd" />
            <path d="M2 2h5v3H2zM10 2h1v3h-1z" fill="#fff" />
          </svg>
          <svg width="9" height="9" viewBox="0 0 9 9" fill="none" stroke="#c8c8c8">
            <path d="M.5 8.500a8 8 0 0 1 8-8M3 8.500A5.500 5.500 0 0 1 8.500 3M5.500 8.500a3 3 0 0 1 3-3" />
            <path d="M7 7h1.500v1.500H7z" fill="#fff" />
          </svg>
          <svg width="9" height="9" viewBox="0 0 9 9" fill="none" stroke="#e2e2e2">
            <path d="M.5 3.200h1.700L4.500 1v7L2.200 5.800H.5z" />
            <path d="M6 3v3" />
            <path d="M7.500 1.500v6" stroke="#777" />
          </svg>
          <svg width="11" height="10" viewBox="0 0 11 10" fill="none" stroke="#e6e6e6">
            <path d="M.5.5h10v7H7L5.500 9.300V7.500h-5zM2.500 3h6M2.500 5h4" />
          </svg>
          <svg width="14" height="9" viewBox="0 0 14 9" fill="none" stroke="#c9c9c9">
            <path d="M.5.5h13v8H.5z" />
            <path d="M2 2.500h10M2 4.500h10" strokeDasharray="1 1" />
            <path d="M3.500 6.500h7" />
          </svg>
          <Clock>13:37<br />28/10/2015</Clock>
        </Tray>
      </Taskbar>
    </Desktop>
  );
}
